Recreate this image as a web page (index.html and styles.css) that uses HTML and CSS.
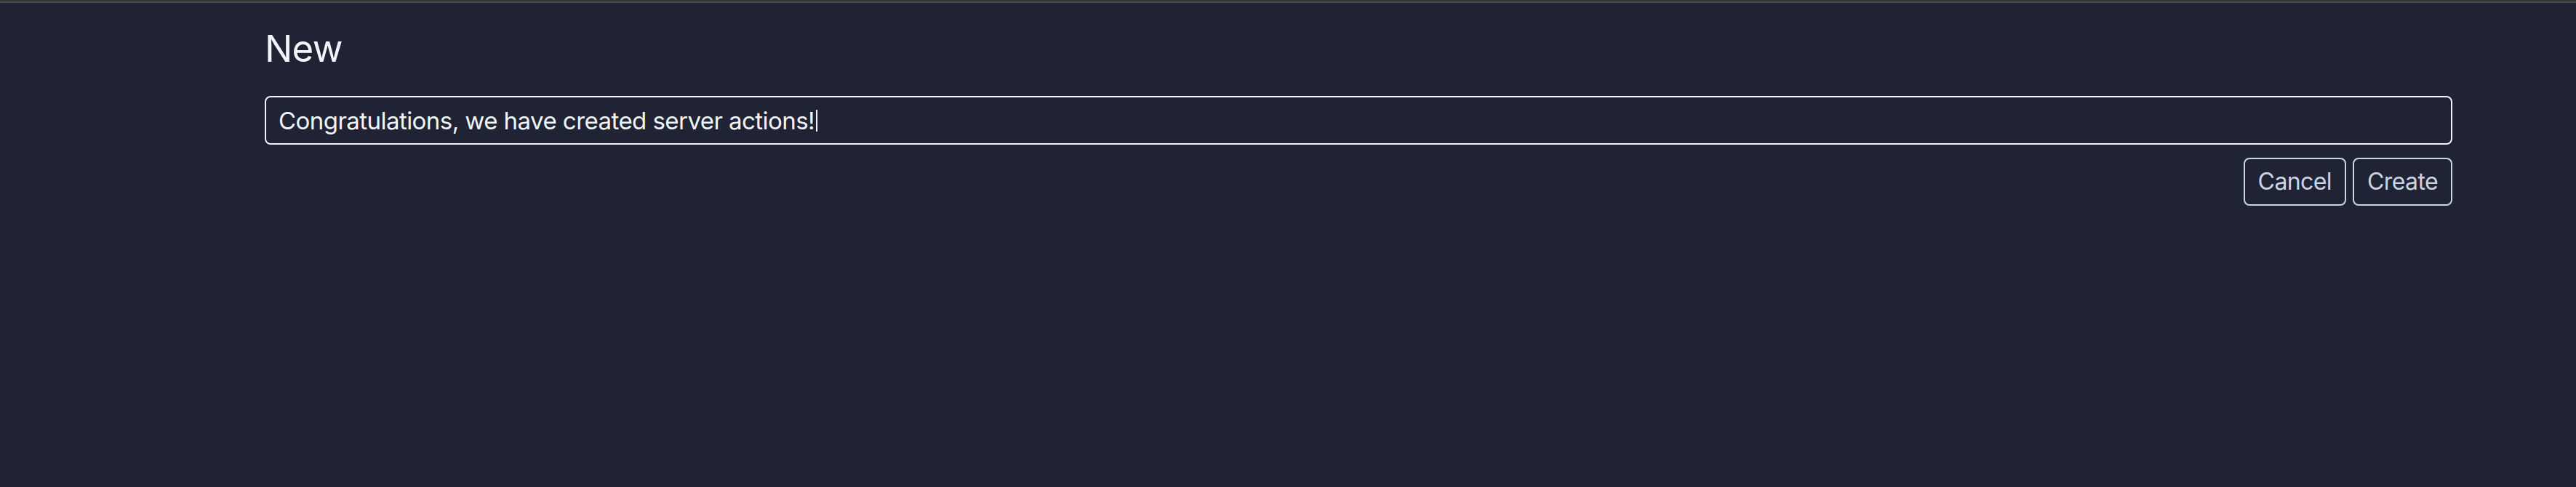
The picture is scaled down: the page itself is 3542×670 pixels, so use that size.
FILE: index.html
```html
<!DOCTYPE html>
<html lang="en">
<head>
<meta charset="utf-8">
<title>New</title>
<link rel="stylesheet" href="styles.css">
</head>
<body>
<div class="topbar"></div>
<main class="page">
  <h1 class="title">New</h1>
  <form class="form">
    <div class="field"><span class="value">Congratulations, we have created server actions!</span><span class="caret"></span></div>
    <div class="actions">
      <button type="button" class="btn">Cancel</button>
      <button type="button" class="btn">Create</button>
    </div>
  </form>
</main>
</body>
</html>
```
FILE: styles.css
```css
html, body {
  margin: 0;
  padding: 0;
  background: #1f2333;
  height: 100%;
}
body {
  font-family: Inter, "Noto Sans", sans-serif;
  color: #f1f5f9;
  overflow: hidden;
}
.topbar {
  height: 2px;
  background: #333437;
  border-bottom: 2px solid #4b4c50;
}
.page {
  padding: 31px 0 0 364px;
  width: 3008px;
}
.title {
  margin: 0;
  font-size: 51px;
  line-height: 64px;
  font-weight: 400;
  letter-spacing: -0.8px;
  color: #f1f5f9;
}
.form {
  margin-top: 33px;
  display: flex;
  flex-direction: column;
}
.field {
  box-sizing: border-box;
  height: 67px;
  border: 2px solid #f1f5f9;
  border-radius: 8px;
  padding: 0 17px;
  display: flex;
  align-items: center;
  font-size: 33px;
  letter-spacing: -0.55px;
  color: #f1f5f9;
}
.caret {
  display: inline-block;
  width: 2px;
  height: 30px;
  background: #f1f5f9;
  margin-left: 2px;
}
.actions {
  margin-top: 18px;
  display: flex;
  justify-content: flex-end;
  gap: 9px;
}
.btn {
  box-sizing: border-box;
  height: 66px;
  padding: 0 18px;
  background: transparent;
  border: 2px solid #cbd5e1;
  border-radius: 8px;
  color: #cbd5e1;
  font-family: Inter, "Noto Sans", sans-serif;
  font-size: 32px;
  letter-spacing: -0.6px;
  line-height: 1;
  cursor: pointer;
}
```
